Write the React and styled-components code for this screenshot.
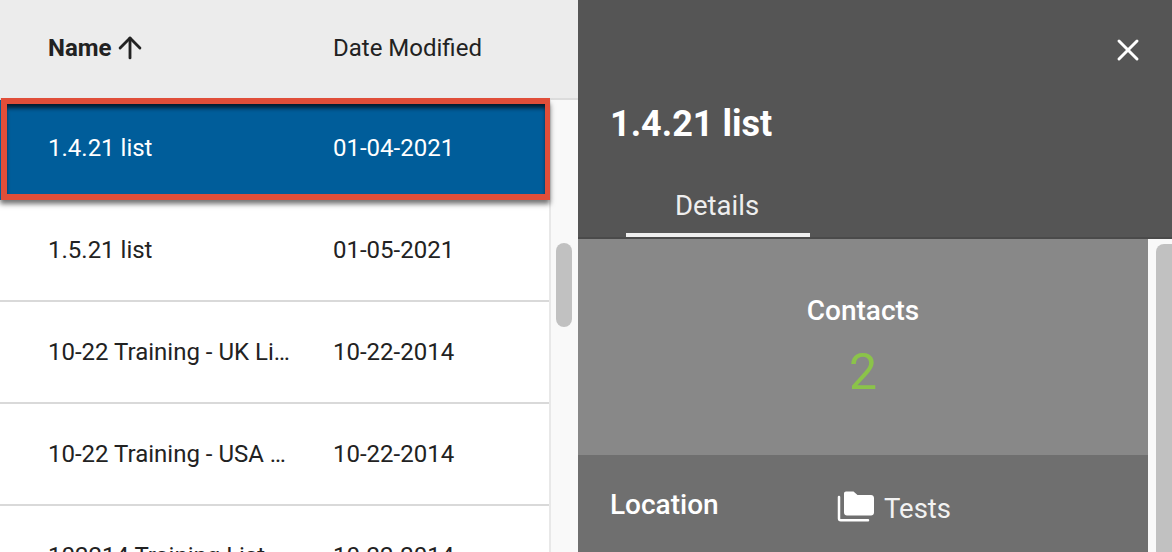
import React from 'react';
import styled, { createGlobalStyle } from 'styled-components';
import { ArrowUp, X } from 'lucide-react';

const GlobalStyle = createGlobalStyle`
  html, body {
    margin: 0;
    padding: 0;
    height: 552px;
    overflow: hidden;
    font-family: Roboto, "Liberation Sans", sans-serif;
  }
`;

const Page = styled.div`
  display: flex;
  width: 1172px;
  height: 552px;
  overflow: hidden;
`;

const ListPane = styled.div`
  width: 578px;
  flex-shrink: 0;
  display: flex;
  flex-direction: column;
  background: #fff;
`;

const ListHeader = styled.div`
  height: 96px;
  flex-shrink: 0;
  display: flex;
  align-items: center;
  padding: 0 0 2px 48px;
  background: #ececec;
  border-bottom: 2px solid #dcdcdc;
  font-size: 24px;
  color: #222;
`;

const NameColumn = styled.div`
  width: 285px;
  flex-shrink: 0;
  display: flex;
  align-items: center;
  gap: 1px;
  font-weight: ${(p) => (p.$bold ? 700 : 400)};

  svg {
    margin: -4px 0;
  }
`;

const ListBody = styled.div`
  flex: 1;
  display: flex;
  min-height: 0;
`;

const Rows = styled.div`
  width: 549px;
  flex-shrink: 0;
`;

const Row = styled.div`
  height: 100px;
  display: flex;
  align-items: center;
  padding-left: 48px;
  border-bottom: 2px solid #d9d9d9;
  font-size: 24px;
  color: #222;
`;

const SelectedRow = styled(Row)`
  position: relative;
  height: 96px;
  padding-bottom: 4px;
  margin-right: -1px;
  background: #005d9a;
  color: #fff;
  border-bottom: 0;
  box-shadow: 0 4px 5px rgba(0, 0, 0, 0.55);

  &::after {
    content: '';
    position: absolute;
    inset: -2px 0 0 1px;
    border: 6px solid #e04e39;
    border-right-width: 5px;
    box-shadow: inset 0 5px 4px -1px rgba(0, 0, 0, 0.7);
  }
`;

const RowName = styled.div`
  width: 244px;
  margin-right: 41px;
  flex-shrink: 0;
  white-space: nowrap;
  overflow: hidden;
  text-overflow: ellipsis;
`;

const RowDate = styled.div`
  white-space: nowrap;
  position: relative;
  z-index: 1;
`;

const ScrollGutter = styled.div`
  flex: 1;
  background: #f9f9f9;
  border-left: 2px solid #e8e8e8;
  display: flex;
  justify-content: center;
  padding-top: 143px;
  padding-right: 2px;
`;

const ScrollThumb = styled.div`
  width: 16px;
  height: 84px;
  border-radius: 8px;
  background: #c1c1c1;
`;

const DetailPane = styled.div`
  flex: 1;
  display: flex;
  flex-direction: column;
  background: #555;
  color: #fff;
`;

const DetailHeader = styled.div`
  position: relative;
  height: 239px;
  flex-shrink: 0;
  box-sizing: border-box;
  display: flex;
  flex-direction: column;
  padding: 101px 32px 0;
  border-bottom: 2px solid #4a4a4a;
`;

const CloseButton = styled.div`
  position: absolute;
  top: 32px;
  right: 26px;
  display: flex;
  color: #fff;
`;

const Title = styled.div`
  font-size: 36px;
  font-weight: 700;
  line-height: 46px;
`;

const Tabs = styled.div`
  display: flex;
  margin-top: auto;
  margin-left: 16px;
`;

const Tab = styled.div`
  width: 184px;
  height: 47px;
  box-sizing: border-box;
  padding-right: 2px;
  text-align: center;
  font-size: 27.5px;
  line-height: 32px;
  color: #eee;
  border-bottom: 4px solid #eee;
`;

const DetailBody = styled.div`
  flex: 1;
  display: flex;
  min-height: 0;
`;

const DetailContent = styled.div`
  width: 570px;
  flex-shrink: 0;
  display: flex;
  flex-direction: column;
`;

const StatBlock = styled.div`
  height: 216px;
  flex-shrink: 0;
  display: flex;
  flex-direction: column;
  align-items: center;
  padding-top: 56px;
  box-sizing: border-box;
  background: #888;
`;

const StatLabel = styled.div`
  font-size: 28px;
  font-weight: 500;
  line-height: 32px;
`;

const StatValue = styled.div`
  font-size: 50px;
  line-height: 62px;
  margin-top: 14px;
  color: #8bc34a;
`;

const InfoRow = styled.div`
  flex: 1;
  display: flex;
  align-items: flex-start;
  padding: 33px 0 0 32px;
  background: #6f6f6f;
`;

const InfoLabel = styled.div`
  width: 227px;
  font-size: 28px;
  font-weight: 500;
  line-height: 34px;
`;

const InfoValue = styled.div`
  display: flex;
  align-items: center;
  gap: 9px;
  font-size: 27.5px;
  line-height: 38px;
  color: #f2f2f2;

  span {
    position: relative;
    top: 2px;
  }
`;

const DetailGutter = styled.div`
  flex: 1;
  background: #f9f9f9;
  padding: 5px 0 0 8px;
`;

const DetailThumb = styled.div`
  height: 100%;
  border-radius: 8px 0 0 0;
  background: #c1c1c1;
`;

const FolderIcon = () => (
  <svg width="38" height="32" viewBox="0 0 38 32" fill="none">
    <path d="M7 2.5C7 1.4 7.9.5 9 .5h7.5l4 3.5H34c1.7 0 3 1.3 3 3v14.5c0 1.7-1.3 3-3 3H10c-1.7 0-3-1.3-3-3V2.5z" fill="#fff" />
    <path d="M2 6v21.5c0 1 .8 1.8 1.8 1.8H31" stroke="#fff" strokeWidth="2.5" strokeLinecap="round" />
  </svg>
);

const rows = [
  { name: '1.5.21 list', date: '01-05-2021' },
  { name: '10-22 Training - UK Li…', date: '10-22-2014' },
  { name: '10-22 Training - USA …', date: '10-22-2014' },
  { name: '102214 Training List', date: '10-22-2014' },
];

export default function App() {
  return (
    <Page>
      <GlobalStyle />
      <ListPane>
        <ListHeader>
          <NameColumn $bold>
            Name
            <ArrowUp size={34} strokeWidth={2} />
          </NameColumn>
          <div>Date Modified</div>
        </ListHeader>
        <ListBody>
          <Rows>
            <SelectedRow>
              <RowName>1.4.21 list</RowName>
              <RowDate>01-04-2021</RowDate>
            </SelectedRow>
            {rows.map((row) => (
              <Row key={row.name}>
                <RowName>{row.name}</RowName>
                <RowDate>{row.date}</RowDate>
              </Row>
            ))}
          </Rows>
          <ScrollGutter>
            <ScrollThumb />
          </ScrollGutter>
        </ListBody>
      </ListPane>
      <DetailPane>
        <DetailHeader>
          <CloseButton>
            <X size={36} strokeWidth={2} />
          </CloseButton>
          <Title>1.4.21 list</Title>
          <Tabs>
            <Tab>Details</Tab>
          </Tabs>
        </DetailHeader>
        <DetailBody>
          <DetailContent>
            <StatBlock>
              <StatLabel>Contacts</StatLabel>
              <StatValue>2</StatValue>
            </StatBlock>
            <InfoRow>
              <InfoLabel>Location</InfoLabel>
              <InfoValue>
                <FolderIcon />
                <span>Tests</span>
              </InfoValue>
            </InfoRow>
          </DetailContent>
          <DetailGutter>
            <DetailThumb />
          </DetailGutter>
        </DetailBody>
      </DetailPane>
    </Page>
  );
}
